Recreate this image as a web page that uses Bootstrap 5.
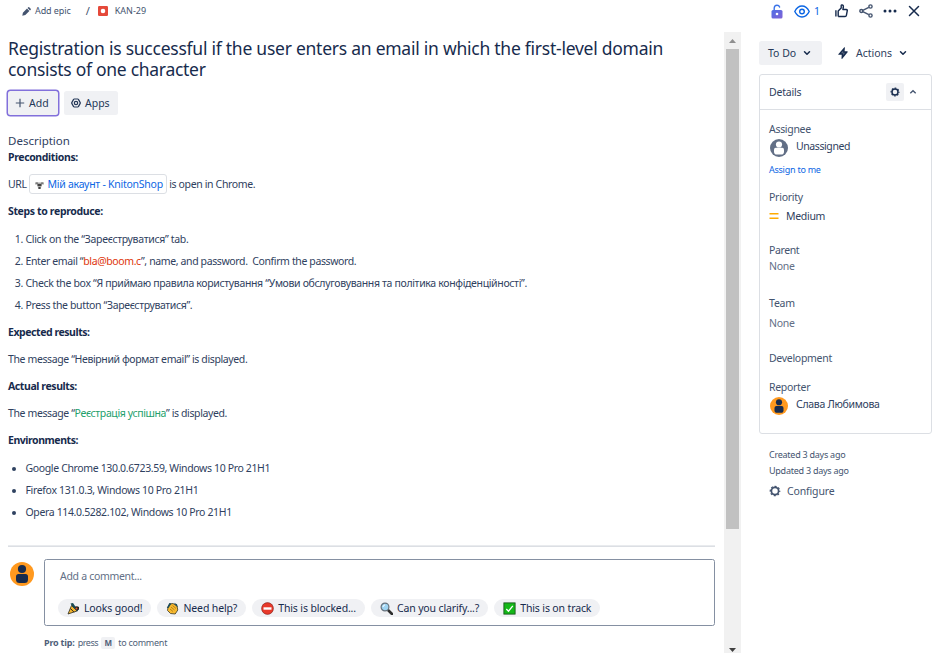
<!DOCTYPE html>
<html lang="en">
<head>
<meta charset="utf-8">
<meta name="viewport" content="width=device-width, initial-scale=1">
<title>KAN-29</title>
<link rel="stylesheet" href="https://cdn.jsdelivr.net/npm/bootstrap@5.3.0/dist/css/bootstrap.min.css">
<style>
body{font-family:"Noto Sans","Open Sans",sans-serif;font-size:10.5px;line-height:18px;color:#2f4160;background:#fff;height:653px;overflow:hidden}
svg{display:block;flex:none}
.ink{color:#172b4d}
.ink2{color:#44546f}
.tiny{font-size:9px}
/* tracking steps */
.tk-1{letter-spacing:-.1px}.tk-2{letter-spacing:-.2px}.tk-25{letter-spacing:-.25px}.tk-3{letter-spacing:-.3px}
.tk-33{letter-spacing:-.34px}.tk-35{letter-spacing:-.36px}.tk-37{letter-spacing:-.38px}.tk-4{letter-spacing:-.41px}.tk-45{letter-spacing:-.45px}
/* top bar */
.topbar{height:32px;padding:0 17px 10px 22px}
.crumb-sep{margin:0 8px 0 15px;font-size:11px}
/* issue column */
.issue{width:724px;padding:6px 0 0 8px}
.issue-title{font-size:17.5px;line-height:21px;font-weight:400;margin:0 0 11px;color:#172b4d;letter-spacing:-.25px}
.btn-soft{--bs-btn-bg:#f0f1f4;--bs-btn-color:#253858;--bs-btn-hover-bg:#e4e6ea;--bs-btn-padding-x:7px;--bs-btn-padding-y:0;--bs-btn-font-size:10.5px;--bs-btn-border-radius:2.5px;--bs-btn-border-width:0;height:24px;line-height:24px;display:flex;align-items:center;white-space:nowrap}
.ringed{box-shadow:0 0 0 1.5px #8270db;width:50px}
.desc-head{font-size:11.5px;line-height:15px;margin:18px 0 0;font-weight:400}
.desc p{margin:0 0 9px}
.desc b{color:#172b4d;font-weight:700}
.desc ol,.desc ul{padding-left:17.5px;margin:10px 0 9px}
.desc li{margin-bottom:4px}
.desc li::marker{letter-spacing:-.3px}
.smart{border:1px solid #dcdfe4;border-radius:3px;padding:2px 3px 2px 4px;color:#0c66e4;text-decoration:none;letter-spacing:-.26px}
.smart svg{display:inline-block;vertical-align:-1.5px;margin-right:2.500px}
.says-bad{color:#de350b}.says-good{color:#22a06b}
.rule{border-top:1px solid #e9ebee;border-bottom:1px solid #dcdfe4;width:707px;margin-top:24px}
.comment-row{margin-top:12px}
.comment-box{border:1px solid #8590a2;border-radius:2.5px;width:671px;height:67px;padding:7px 13px}
.placeholder-line{color:#626f86;margin:0 0 14px 2px}
.chip{background:#f0f1f4;border-radius:9px;height:18px;padding:0 9px;gap:4px;color:#172b4d;letter-spacing:-.14px;white-space:nowrap}
.pro-tip{margin:8px 0 0 36px;color:#505f79}
.kbd-key{background:#f0f1f4;border-radius:2px;font-weight:700;font-size:8px;line-height:12px;width:14px;text-align:center;margin:0 3px}
/* scrollbar */
.track{width:17px;background:#f1f1f1;height:621px;padding:6px 0 1px}
.thumb{width:13px;height:480px;background:#c1c1c1;margin-top:6px}
/* side column */
.side{width:173px;margin-left:18px;padding-top:9px}
.panel{border:1px solid #dcdfe4;border-radius:3px;height:360px;margin-top:9px}
.panel-top{height:35px;border-bottom:1px solid #dcdfe4;padding:0 14px 0 9px}
.gear-box{width:18px;height:18px;background:#f0f1f4;border-radius:2px;margin-right:5px}
.field{padding-left:9px;line-height:16px}
.field dt{font-weight:400;color:#44546f}
.field dd{margin:0;display:flex;align-items:center}
.field .quiet{color:#626f86}
.stamps{padding:13px 0 0 10px;line-height:16px;color:#44546f}
</style>
<script src="https://cdn.jsdelivr.net/npm/bootstrap@5.3.0/dist/js/bootstrap.bundle.min.js"></script>
</head>
<body>
<svg width="0" height="0" class="position-absolute">
 <defs>
  <symbol id="gear" viewBox="0 0 12 12"><circle cx="6" cy="6" r="3.600" fill="none" stroke="currentColor" stroke-width="1.700"/><circle cx="6" cy="6" r="4.700" fill="none" stroke="currentColor" stroke-width="1.300" stroke-dasharray="2 1.691" stroke-dashoffset="1"/></symbol>
  <symbol id="person" viewBox="0 0 24 24"><circle cx="12" cy="12" r="12" fill="#ff991f"/><circle cx="12" cy="7" r="4.100" fill="#172b4d"/><path d="M6 14.500q0-2.500 2.500-2.500h7q2.500 0 2.500 2.500v3q0 3.500-3.500 3.500h-5Q6 21 6 17.500z" fill="#172b4d"/></symbol>
  <symbol id="down" viewBox="0 0 8 8"><path d="M1.500 2.700 4 5.200l2.500-2.500" fill="none" stroke="#172b4d" stroke-width="1.500" stroke-linecap="round" stroke-linejoin="round"/></symbol>
 </defs>
</svg>
<header class="topbar d-flex align-items-center justify-content-between">
 <div class="d-flex align-items-center tiny ink2">
  <svg width="9" height="9" viewBox="0 0 9 9" fill="#44546f"><path d="M.3 8.700l.6-3L5 1.600l2.400 2.400L3.300 8.100zM5.600 1l.7-.7q.4-.4.9 0l1.500 1.500q.4.500 0 .9l-.7.700z"/></svg>
  <span class="tk-1" style="margin-left:4px">Add epic</span>
  <span class="crumb-sep">/</span>
  <svg width="10" height="10" viewBox="0 0 10 10"><rect width="10" height="10" rx="1.200" fill="#e5493a"/><circle cx="5" cy="5" r="2.300" fill="#fff"/></svg>
  <span style="margin-left:7px">KAN-29</span>
 </div>
 <div class="d-flex align-items-center">
  <svg width="12" height="15" viewBox="0 0 12 15"><defs><linearGradient id="lk" x1="0" y1="0" x2="1" y2="1"><stop offset="0" stop-color="#4f6fe6"/><stop offset="1" stop-color="#8062d6"/></linearGradient></defs><path d="M3.200 6.500V4.200Q3.200 1.200 6 1.200q2 0 2.600 1.800" fill="none" stroke="#3b73e8" stroke-width="1.400" stroke-linecap="round"/><rect x=".5" y="6" width="11" height="8.500" rx="1.500" fill="url(#lk)"/><circle cx="6" cy="10" r="1.300" fill="#fff"/></svg>
  <svg width="16" height="13" viewBox="0 0 16 13" style="margin-left:11px" fill="none" stroke="#0c66e4" stroke-width="1.400"><path d="M.8 6.500Q3.500 1 8 1t7.200 5.500Q12.500 12 8 12T.8 6.500z"/><circle cx="8" cy="6.500" r="2.300"/></svg>
  <span style="color:#0c66e4;width:6px;margin:0 15px 0 4px">1</span>
  <svg width="13" height="14" viewBox="0 0 13 14" fill="none" stroke="#172b4d" stroke-width="1.400" stroke-linejoin="round"><path d="M.9 6.200v6.200M3.200 12.400V7.100l3-3V1.500q0-.7.8-.6 1.700.2 1.300 2.600l-.4 2h3.500q1 0 .9 1l-.9 4.800q-.2 1.200-1.300 1.200H3.200"/></svg>
  <svg width="14" height="14" viewBox="0 0 14 14" style="margin-left:11px" fill="none" stroke="#44546f" stroke-width="1.400"><path d="M3.800 6.300l6-3M3.800 7.700l6 3"/><circle cx="2.300" cy="7" r="1.500"/><circle cx="11.500" cy="2.500" r="1.600"/><circle cx="11.500" cy="11.500" r="1.600"/></svg>
  <svg width="14" height="4" viewBox="0 0 14 4" style="margin-left:10px" fill="#172b4d"><circle cx="2" cy="2" r="1.500"/><circle cx="7" cy="2" r="1.500"/><circle cx="12" cy="2" r="1.500"/></svg>
  <svg width="12" height="12" viewBox="0 0 12 12" style="margin-left:11px" fill="none" stroke="#172b4d" stroke-width="1.500" stroke-linecap="round"><path d="M1.500 1.500l9 9M10.500 1.500l-9 9"/></svg>
 </div>
</header>
<div class="d-flex">
<main class="issue">
 <h1 class="issue-title">Registration is successful if the user enters an email in which the first-level domain<br><span style="letter-spacing:-.29px">consists of one character</span></h1>
 <div class="d-flex align-items-center" style="gap:6px">
  <button class="btn btn-soft ringed"><svg width="10" height="10" viewBox="0 0 10 10" stroke="#44546f" stroke-width="1.200" style="margin-right:4px"><path d="M5 .8v8.400M.8 5h8.400"/></svg><span style="letter-spacing:.1px">Add</span></button>
  <button class="btn btn-soft" style="width:54px"><svg width="10" height="10" viewBox="0 0 10 10" fill="none" stroke="#253858" stroke-width="1.200" style="margin-right:4px"><path d="M3.200 1h3.600q.4 0 .6.400L9.200 4.600q.2.400 0 .8L7.400 8.600q-.2.400-.6.400H3.200q-.4 0-.6-.4L.8 5.400q-.2-.4 0-.8l1.800-3.200q.2-.4.600-.4z"/><circle cx="5" cy="5" r="1.700"/></svg><span>Apps</span></button>
 </div>
 <div class="desc">
 <h2 class="desc-head">Description</h2>
 <p class="tk-37"><b>Preconditions:</b></p>
 <p class="tk-35">URL <span class="smart"><svg width="11" height="9" viewBox="0 0 11 9"><path d="M1 1.500q2-1.200 3.500 0h2Q8 .3 10 1.500v2H7.500v2L6.500 8h-2l-1-2.500v-2H1z" fill="#aaa"/><path d="M3.500 3h4v2h-4zM4.500 6h2v2h-2z" fill="#444"/><path d="M2 2.200h2M7 2.200h2" stroke="#555" stroke-width=".8"/></svg>Мій акаунт - KnitonShop</span> is open in Chrome.</p>
 <p class="tk-35"><b>Steps to reproduce:</b></p>
 <ol>
  <li style="letter-spacing:-.313px">Click on the “Зареєструватися” tab.</li>
  <li class="tk-37">Enter email “<span class="says-bad">bla@boom.c</span>”, name, and password.&nbsp; Confirm the password.</li>
  <li class="tk-33">Check the box “Я приймаю правила користування “Умови обслуговування та політика конфіденційності”.</li>
  <li class="tk-35">Press the button “Зареєструватися”.</li>
 </ol>
 <p class="tk-45"><b>Expected results:</b></p>
 <p class="tk-37">The message “Невірний формат email” is displayed.</p>
 <p class="tk-4"><b>Actual results:</b></p>
 <p class="tk-37">The message “<span class="says-good">Реєстрація успішна</span>” is displayed.</p>
 <p class="tk-45"><b>Environments:</b></p>
 <ul>
  <li class="tk-35">Google Chrome 130.0.6723.59, Windows 10 Pro 21H1</li>
  <li class="tk-33">Firefox 131.0.3, Windows 10 Pro 21H1</li>
  <li style="letter-spacing:-.36px">Opera 114.0.5282.102, Windows 10 Pro 21H1</li>
 </ul>
 </div>
 <div class="rule"></div>
 <div class="comment-row d-flex">
  <svg width="24" height="24" style="margin:3px 10px 0 2px"><use href="#person"/></svg>
  <div class="comment-box">
   <div class="placeholder-line tk-3">Add a comment...</div>
   <div class="d-flex" style="gap:6px">
    <span class="chip d-flex align-items-center"><svg width="13" height="13" viewBox="0 0 13 13"><path d="M1 12 4.500 3.500 10 9z" fill="#f4b52e" stroke="#2b2b20" stroke-width=".8"/><path d="M3.500 6.500 7 10.200" stroke="#2b2b20"/><path d="M3.500 1.500 6 1l2 3 3.500 3-1 2.500L5 4z" fill="#174a55"/><path d="M8 5.500q1-2 4-.500v2.500l-2 1z" fill="#222"/><circle cx="9.500" cy="6.500" r="1" fill="#e4572e"/></svg><span>Looks good!</span></span>
    <span class="chip d-flex align-items-center"><svg width="13" height="13" viewBox="0 0 13 13"><path d="M2 5 4 2 7 1.500l4 2.500.8 4-2.600 4-4.700-.500L1.500 8.500z" fill="#f7b92f" stroke="#3c3a25" stroke-width=".8"/><path d="M.8 6 3.300 1l2.200.5-3 4.500zM8 .7l3 1.500 1 3-2.500-2z" fill="#1d4b58"/><path d="M5 5l3.500 3M6.500 3.500l3.500 3M4 7l3 2.500" stroke="#9a6c10" stroke-width=".7"/></svg><span>Need help?</span></span>
    <span class="chip d-flex align-items-center"><svg width="13" height="13" viewBox="0 0 13 13"><circle cx="6.500" cy="6.500" r="5.900" fill="#e8392b" stroke="#7c1f17" stroke-width=".6"/><path d="M2.500 5.300h8v2.400h-8z" fill="#fff"/></svg><span>This is blocked...</span></span>
    <span class="chip d-flex align-items-center"><svg width="13" height="13" viewBox="0 0 13 13"><path d="M8 8l4 4" stroke="#2d2d2d" stroke-width="2.600" stroke-linecap="round"/><circle cx="5" cy="5" r="3.900" fill="#9fd4f2" stroke="#68727c" stroke-width="1.200"/><path d="M3 5q.2-2 2-2" stroke="#fff" fill="none"/></svg><span>Can you clarify...?</span></span>
    <span class="chip d-flex align-items-center"><svg width="13" height="13" viewBox="0 0 13 13"><rect x=".9" y=".9" width="11.200" height="11.200" fill="#13b817" stroke="#17571a" stroke-width=".9"/><path d="M3.300 7l2.200 2.200 4.300-5.400" fill="none" stroke="#fff" stroke-width="1.300"/></svg><span>This is on track</span></span>
   </div>
  </div>
 </div>
 <div class="pro-tip tiny d-flex align-items-center"><b class="tk-2">Pro tip:</b><span style="letter-spacing:-.45px;margin-left:3px">press</span><span class="kbd-key">M</span><span class="tk-25">to comment</span></div>
</main>
<div class="track d-flex flex-column align-items-center">
 <svg width="7" height="5" viewBox="0 0 7 5"><path d="M0 5h7L3.500 1z" fill="#8f8f8f"/></svg>
 <div class="thumb"></div>
 <svg class="mt-auto" width="7" height="4" viewBox="0 0 7 4"><path d="M0 0h7L3.500 3.900z" fill="#404040"/></svg>
</div>
<aside class="side">
 <div class="d-flex align-items-center">
  <button class="btn btn-soft" style="width:63px;padding:0 9px"><span>To Do</span><svg width="8" height="8" style="margin-left:7px"><use href="#down"/></svg></button>
  <div class="d-flex align-items-center" style="margin-left:16px"><svg width="10" height="12" viewBox="0 0 10 12" fill="#172b4d"><path d="M6.300.2Q7 0 6.900.8L6.600 4.300h2.600q.9 0 .4.900L4.300 11.700q-.8.600-.8-.4l.2-3.500H.8q-.9 0-.3-.9z"/><path d="M5.200 3.800 3 6.300h2.200v1.900l1.900-2.500H5.200z" fill="#5e6c84"/></svg><span style="margin:0 7px 0 8px">Actions</span><svg width="8" height="8"><use href="#down"/></svg></div>
 </div>
 <section class="panel">
  <div class="panel-top d-flex align-items-center">
   <span class="tk-2 me-auto">Details</span>
   <span class="gear-box d-flex align-items-center justify-content-center ink"><svg width="10" height="10"><use href="#gear"/></svg></span>
   <svg width="8" height="8" viewBox="0 0 8 8"><path d="M1.300 5.300 4 2.700l2.700 2.600" fill="none" stroke="#44546f" stroke-width="1.300"/></svg>
  </div>
  <dl class="field mb-0">
   <dt class="tk-3" style="margin-top:11px">Assignee</dt>
   <dd class="tk-4" style="margin-top:2px;height:18px"><svg width="18" height="18" viewBox="0 0 18 18" style="margin:0 8px 0 1px"><circle cx="9" cy="9" r="9" fill="#626f86"/><circle cx="9" cy="5.500" r="3.100" fill="#fff"/><path d="M4 10.500q0-1.700 1.700-1.700h6.600q1.700 0 1.700 1.700v2.300q0 2.800-2.800 2.800H6.800Q4 15.600 4 12.800z" fill="#fff"/></svg><span class="mb-1" style="line-height:14px">Unassigned</span></dd>
   <dd class="tiny tk-25" style="margin-top:5px;color:#0c66e4">Assign to me</dd>
   <dt class="tk-25" style="margin-top:11px">Priority</dt>
   <dd class="tk-3" style="margin-top:3px"><svg width="10" height="8" viewBox="0 0 10 8" style="margin-right:7px" fill="#ffab00"><path d="M.5 1h9v1.500h-9zM.5 5.500h9V7h-9z"/></svg>Medium</dd>
   <dt class="tk-4" style="margin-top:18px">Parent</dt>
   <dd class="quiet tk-25">None</dd>
   <dt class="tk-2" style="margin-top:21px">Team</dt>
   <dd class="quiet tk-25" style="margin-top:4px">None</dd>
   <dt class="tk-3" style="margin-top:19px">Development</dt>
   <dt class="tk-3" style="margin-top:13px">Reporter</dt>
   <dd class="tk-3" style="margin-top:2px;height:18px"><svg width="18" height="18" style="margin:0 8px 0 1px"><use href="#person"/></svg><span class="mb-1" style="line-height:14px">Слава Любимова</span></dd>
  </dl>
 </section>
 <div class="stamps">
  <div class="tiny tk-25">Created 3 days ago</div>
  <div class="tiny tk-25">Updated 3 days ago</div>
  <div class="d-flex align-items-center" style="margin-top:4px;letter-spacing:-.14px"><svg width="12" height="12" style="margin-right:6px"><use href="#gear"/></svg>Configure</div>
 </div>
</aside>
</div>
</body></html>
